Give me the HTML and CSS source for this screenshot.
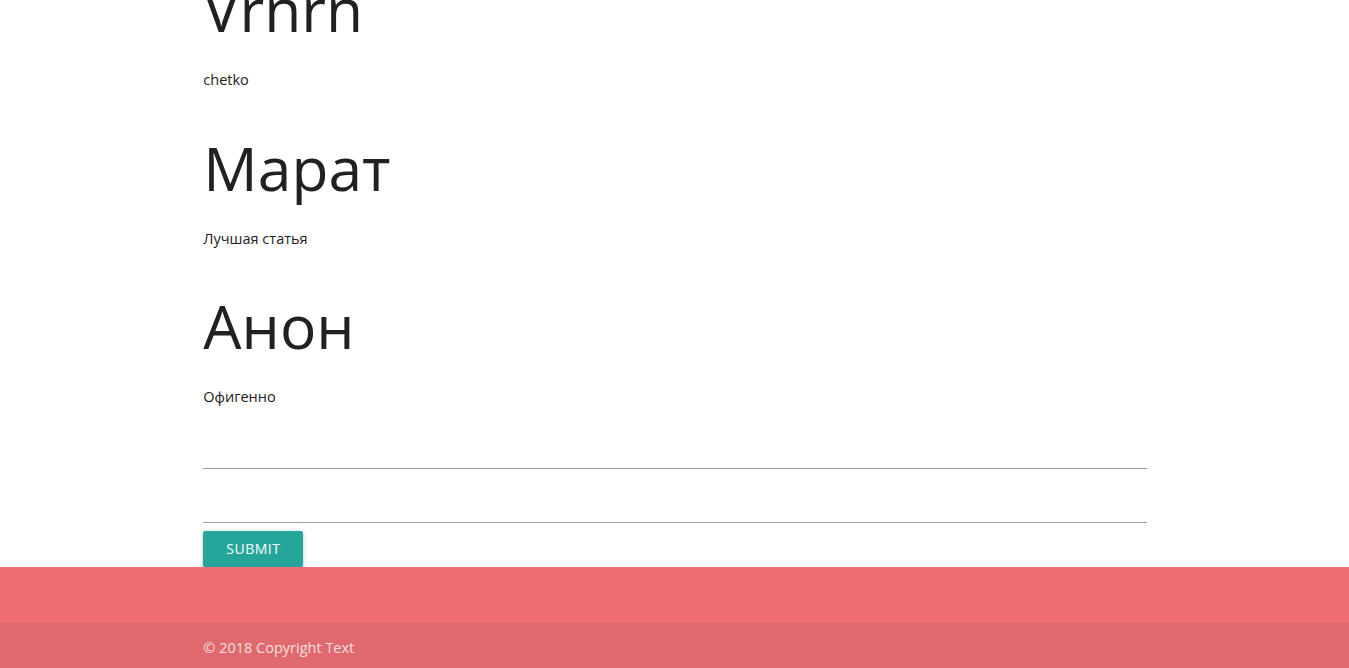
FILE: index.html
```html
<!DOCTYPE html>
<html lang="ru">
<head>
<meta charset="utf-8">
<title>Comments</title>
<link rel="stylesheet" href="styles.css">
</head>
<body>
<main class="container">
  <section class="comments">
    <article class="comment">
      <h2 class="comment-author">Vrnrn</h2>
      <p class="comment-text">chetko</p>
    </article>
    <article class="comment">
      <h2 class="comment-author">Марат</h2>
      <p class="comment-text">Лучшая статья</p>
    </article>
    <article class="comment">
      <h2 class="comment-author">Анон</h2>
      <p class="comment-text">Офигенно</p>
    </article>
  </section>
  <form class="comment-form">
    <div class="input-field"><input type="text" class="field"></div>
    <div class="input-field"><input type="text" class="field"></div>
    <button type="submit" class="btn">Submit</button>
  </form>
</main>
<footer class="page-footer">
  <div class="footer-top"></div>
  <div class="footer-copyright">
    <div class="container">© 2018 Copyright Text</div>
  </div>
</footer>
</body>
</html>
```
FILE: styles.css
```css
html, body {
  margin: 0;
  padding: 0;
}
body {
  font-family: "Open Sans", "Noto Sans", sans-serif;
  color: rgba(0, 0, 0, 0.87);
  font-size: 14.5px;
  background: #fff;
  overflow: hidden;
}
.container {
  width: 70%;
  margin: 0 auto;
  padding-left: 1px;
  box-sizing: border-box;
}
.comments {
  margin-top: -68px;
}
.comment-author {
  font-weight: 400;
  font-size: 60.5px;
  line-height: 70px;
  margin: 42px 0 25px;
  color: #212121;
}
.comment-text {
  margin: 0;
  font-size: 14.5px;
  line-height: 21.5px;
  color: #212121;
}
.comment-form {
  padding-top: 15px;
}
.input-field {
  margin-bottom: 8px;
}
.field {
  display: block;
  width: 100%;
  box-sizing: border-box;
  height: 46px;
  border: none;
  border-bottom: 1px solid #9e9e9e;
  background: transparent;
  outline: none;
  padding: 0;
  margin: 0;
  font: inherit;
}
.btn {
  display: block;
  height: 36px;
  width: 100px;
  padding: 0;
  border: none;
  border-radius: 2px;
  background: #26a69a;
  color: #fff;
  font-family: inherit;
  font-size: 14px;
  text-transform: uppercase;
  letter-spacing: 0.5px;
  box-shadow: 0 2px 2px 0 rgba(0,0,0,.14), 0 3px 1px -2px rgba(0,0,0,.12), 0 1px 5px 0 rgba(0,0,0,.2);
  cursor: pointer;
}
.page-footer {
  background: #ee6e73;
}
.footer-top {
  height: 56px;
}
.footer-copyright {
  background: rgba(51, 51, 51, 0.08);
  height: 50px;
  display: flex;
  align-items: center;
  color: rgba(255, 255, 255, 0.8);
  font-size: 14.5px;
}
.footer-copyright .container {
  line-height: 20px;
}
```
